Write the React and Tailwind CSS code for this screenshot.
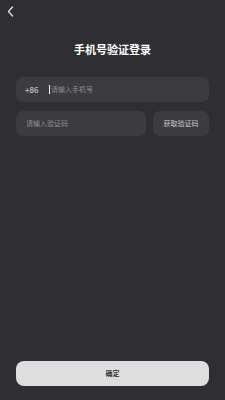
export default function App() {
  const font = { fontFamily: '"Noto Sans CJK SC", "Liberation Sans", sans-serif' }
  return (
    <div className="w-[225px] h-[400px] bg-[#2e2e33] flex flex-col" style={font}>
      {/* 顶部返回 */}
      <div className="h-[22px] flex items-center pl-[7px] pt-[0px]">
        <svg width="7" height="11" viewBox="0 0 7 11" fill="none">
          <path d="M5.5 1 L1.5 5.5 L5.5 10" stroke="#e5e5e5" strokeWidth="1.3" strokeLinecap="round" strokeLinejoin="round" />
        </svg>
      </div>

      <h1 className="mt-[19px] text-center text-[11px] leading-[16px] font-bold text-white">手机号验证登录</h1>

      <div className="px-4 mt-[20px] flex flex-col gap-[9px]">
        <div className="h-[25px] rounded-[7px] bg-[#3b3b40] flex items-center pl-[9px]">
          <span className="text-[8px] text-[#e0e0e0] w-[15px]">+86</span>
          <span className="ml-[9px] w-px h-[9px] bg-white" />
          <span className="ml-[1px] text-[7px] text-[#8e8e92]">请输入手机号</span>
        </div>
        <div className="flex gap-[7px]">
          <div className="flex-1 h-[25px] rounded-[7px] bg-[#3b3b40] flex items-center pl-[10px]">
            <span className="text-[7px] text-[#8e8e92]">请输入验证码</span>
          </div>
          <div className="w-[56px] h-[25px] rounded-[7px] bg-[#3b3b40] flex items-center justify-center">
            <span className="text-[7px] text-[#c8c8cc]">获取验证码</span>
          </div>
        </div>
      </div>

      <div className="flex-1" />

      <div className="px-4 pb-[14px]">
        <div className="h-[25px] rounded-[8px] bg-[#dedede] flex items-center justify-center">
          <span className="text-[7px] font-bold text-[#333]">确定</span>
        </div>
      </div>
    </div>
  )
}
